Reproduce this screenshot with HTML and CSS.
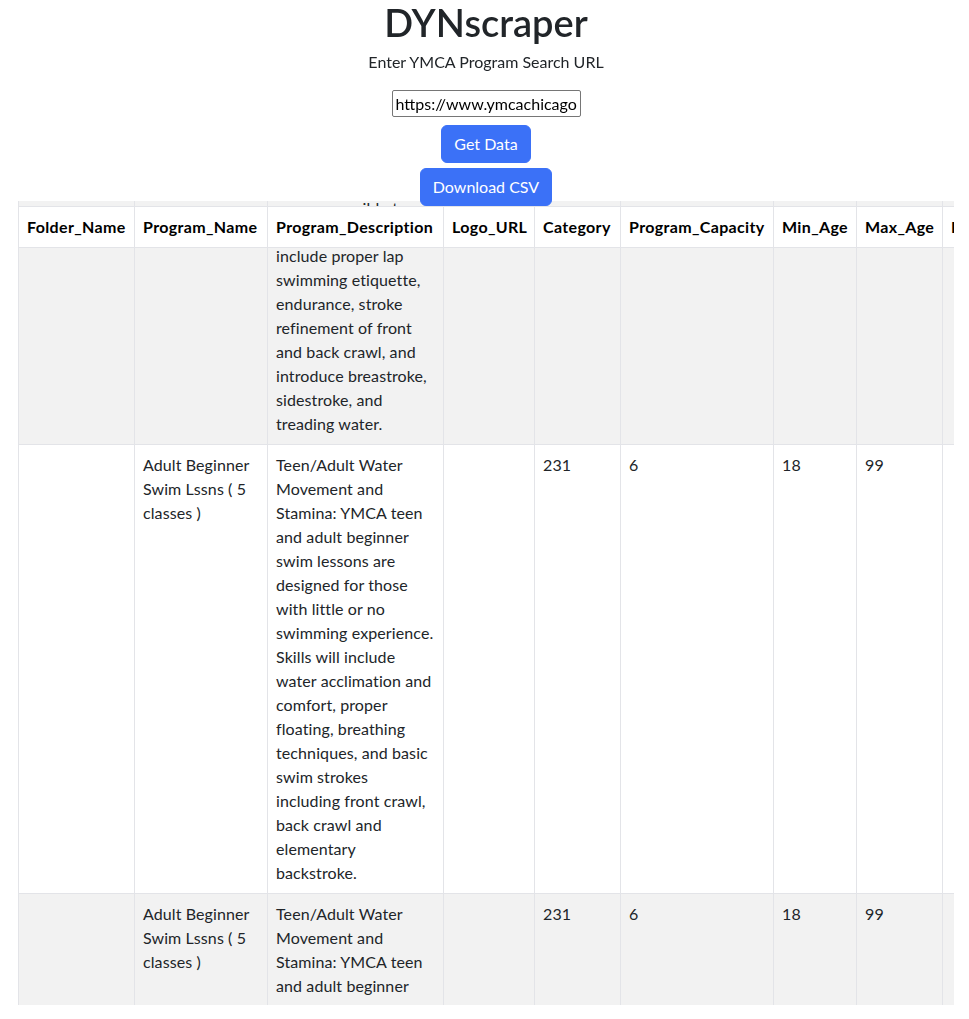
FILE: index.html
```html
<!DOCTYPE html>
<html lang="en">
<head>
<meta charset="utf-8">
<title>DYNscraper</title>
<link rel="stylesheet" href="styles.css">
</head>
<body>
<div class="page">
  <header class="top">
    <h1 class="title">DYNscraper</h1>
    <p class="subtitle">Enter YMCA Program Search URL</p>
    <div class="controls">
      <input class="url-input" type="text" value="https://www.ymcachicago.org/programs/search">
      <button class="btn">Get Data</button>
      <button class="btn">Download CSV</button>
    </div>
  </header>
  <div class="table-wrap">
    <table class="data-table">
      <colgroup>
        <col class="c-folder"><col class="c-name"><col class="c-desc"><col class="c-logo"><col class="c-cat"><col class="c-cap"><col class="c-min"><col class="c-max"><col class="c-price"><col class="c-loc"><col class="c-days">
      </colgroup>
      <thead>
        <tr>
          <th>Folder_Name</th><th>Program_Name</th><th>Program_Description</th><th>Logo_URL</th><th>Category</th><th>Program_Capacity</th><th>Min_Age</th><th>Max_Age</th><th>Price</th><th>Location</th><th>Days</th>
        </tr>
      </thead>
      <tbody>
        <tr class="odd">
          <td></td>
          <td>Adult Intermediate Swim Lssns ( 5 classes )</td>
          <td>Adult Intermediate Swim: YMCA adult intermediate swim lessons are designed to make lap swimming more accessible to adults. Lessons will include proper lap swimming etiquette, endurance, stroke refinement of front and back crawl, and introduce breastroke, sidestroke, and treading water.</td>
          <td></td><td>231</td><td>6</td><td>18</td><td>99</td><td></td><td>Lake View</td><td>Tu</td>
        </tr>
        <tr>
          <td></td>
          <td>Adult Beginner Swim Lssns ( 5 classes )</td>
          <td>Teen/Adult Water Movement and Stamina: YMCA teen and adult beginner swim lessons are designed for those with little or no swimming experience. Skills will include water acclimation and comfort, proper floating, breathing techniques, and basic swim strokes including front crawl, back crawl and elementary backstroke.</td>
          <td></td><td>231</td><td>6</td><td>18</td><td>99</td><td></td><td>Lake View</td><td>Mo</td>
        </tr>
        <tr class="odd">
          <td></td>
          <td>Adult Beginner Swim Lssns ( 5 classes )</td>
          <td>Teen/Adult Water Movement and Stamina: YMCA teen and adult beginner swim lessons are designed for those with little or no swimming experience. Skills will include water acclimation and comfort, proper floating, breathing techniques, and basic swim strokes including front crawl, back crawl and elementary backstroke.</td>
          <td></td><td>231</td><td>6</td><td>18</td><td>99</td><td></td><td>Lake View</td><td>We</td>
        </tr>
        <tr>
          <td></td>
          <td>Adult Beginner Swim Lssns ( 5 classes )</td>
          <td>Teen/Adult Water Movement and Stamina: YMCA teen and adult beginner swim lessons are designed for those with little or no swimming experience.</td>
          <td></td><td>231</td><td>6</td><td>18</td><td>99</td><td></td><td>Lake View</td><td>Th</td>
        </tr>
      </tbody>
    </table>
  </div>
</div>
<script src="script.js"></script>
</body>
</html>
```
FILE: styles.css
```css
* { box-sizing: border-box; }
html, body { margin: 0; padding: 0; background: #fff; }
body {
  font-family: "Lato", "Noto Sans", "Liberation Sans", sans-serif;
  font-size: 16px;
  line-height: 24px;
  color: #212529;
}
.page {
  padding: 0 15px 0 18px;
}
.top {
  display: flex;
  flex-direction: column;
  align-items: center;
  position: relative;
  z-index: 2;
}
.title {
  margin: 2px 0 0;
  font-size: 38px;
  line-height: 40px;
  font-weight: 600;
  color: #212529;
}
.subtitle {
  margin: 8px 0 0;
  font-size: 16px;
  line-height: 24px;
}
.controls {
  margin-top: 16px;
  display: flex;
  flex-direction: column;
  align-items: center;
  gap: 6px;
}
.url-input {
  width: 189px;
  height: 27px;
  margin-bottom: 2px;
  padding: 1px 3px;
  border: 1px solid #767676;
  border-radius: 2px;
  font-family: inherit;
  font-size: 16px;
  color: #000;
  background: #fff;
}
.btn {
  font-family: inherit;
  font-size: 16px;
  line-height: 24px;
  padding: 6px 12px;
  border: 1px solid #3b71f7;
  border-radius: 6px;
  background: #3b71f7;
  color: #fff;
  cursor: pointer;
}
.controls .btn + .btn { margin-top: -1px; }
.table-wrap {
  position: relative;
  z-index: 1;
  margin-top: -5px;
  height: 804px;
  overflow: auto;
  scrollbar-width: none;
}
.table-wrap::-webkit-scrollbar { display: none; }
.data-table {
  table-layout: fixed;
  width: 1200px;
  border-collapse: separate;
  border-spacing: 0;
}
.c-folder { width: 117px; }
.c-name { width: 133px; }
.c-desc { width: 176px; }
.c-logo { width: 91px; }
.c-cat { width: 86px; }
.c-cap { width: 153px; }
.c-min { width: 83px; }
.c-max { width: 86px; }
.c-price { width: 100px; }
.c-loc { width: 120px; }
.c-days { width: 155px; }
.data-table th,
.data-table td {
  padding: 8px 8px;
  text-align: left;
  vertical-align: top;
  border-right: 1px solid #e3e4e8;
  border-bottom: 1px solid #e3e4e8;
}
.data-table td {
  letter-spacing: 0.1px;
}
.data-table th:first-child,
.data-table td:first-child {
  border-left: 1px solid #e3e4e8;
}
.data-table th {
  position: sticky;
  top: 5px;
  z-index: 1;
  background: #fff;
  color: #000;
  font-weight: 700;
  letter-spacing: 0.35px;
  white-space: nowrap;
  border-top: 1px solid #e3e4e8;
}
.data-table tr.odd td {
  background: #f2f2f2;
}
```
FILE: script.js
```js
(function () {
  var wrap = document.querySelector('.table-wrap');
  var firstRow = document.querySelector('.data-table tbody tr');
  var rowBottom = firstRow.getBoundingClientRect().bottom;
  wrap.scrollTop = rowBottom - 445;
})();
```
